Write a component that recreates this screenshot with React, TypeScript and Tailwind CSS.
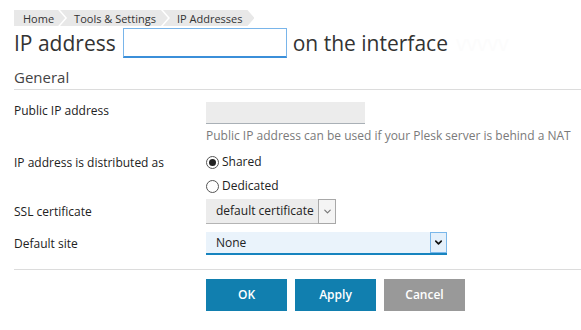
import { ChevronDown } from "lucide-react";

const crumbs = ["Home", "Tools & Settings", "IP Addresses"];

/* ── Breadcrumb tab ──────────────────────────────────────────── */
function Crumb({ label, first }: { label: string; first: boolean }) {
  return (
    <div
      className={`bg-[#e8e8e8] h-4 flex items-center text-[11px] leading-none text-[#333] ${
        first
          ? "pl-[9px] pr-[11px] [clip-path:polygon(0_0,calc(100%_-_7px)_0,100%_50%,calc(100%_-_7px)_100%,0_100%)]"
          : "-ml-[5px] pl-[14px] pr-[12px] [clip-path:polygon(0_0,calc(100%_-_7px)_0,100%_50%,calc(100%_-_7px)_100%,0_100%,7px_50%)]"
      }`}
    >
      {label}
    </div>
  );
}

/* ── Form row ────────────────────────────────────────────────── */
function Row({ label, children, className = "" }: { label: string; children: React.ReactNode; className?: string }) {
  return (
    <div className={`flex ${className}`}>
      <div className="w-[192px] shrink-0 text-[12px] text-[#222]">{label}</div>
      <div className="flex-1">{children}</div>
    </div>
  );
}

function Radio({ label, checked }: { label: string; checked?: boolean }) {
  return (
    <div className="flex items-center gap-[3px] h-4 text-[12px] text-[#222]">
      <span className="w-[13px] h-[13px] rounded-full border border-[#555] bg-white flex items-center justify-center">
        {checked && <span className="w-[7px] h-[7px] rounded-full bg-[#222]" />}
      </span>
      {label}
    </div>
  );
}

export default function App() {
  return (
    <div className="w-[581px] h-[330px] bg-white overflow-hidden pl-[14px] pt-[10px] font-['Open_Sans',sans-serif]">
      {/* Breadcrumbs */}
      <div className="flex">
        {crumbs.map((c, i) => (
          <Crumb key={c} label={c} first={i === 0} />
        ))}
      </div>

      {/* Title */}
      <div className="flex items-center mt-[2px] h-[30px] text-[21px] leading-none text-[#333]">
        <span>IP address</span>
        <div className="w-[164px] h-[30px] ml-[7px] mr-[6px] border border-[#79b5ea] border-b-2 border-b-[#3b8fd9] bg-white" />
        <span>on the interface</span>
        <span className="ml-[8px] text-[#fcfcfc]">vvvvv</span>
      </div>

      {/* Section */}
      <div className="mt-[10px] text-[15px] leading-[18px] text-[#444] pb-[3px] border-b border-[#dcdcdc]">
        General
      </div>

      <Row label="Public IP address" className="mt-[12px] items-start">
        <div className="w-[159px] h-[22px] bg-[#ececec] border-b border-[#a9b0b6]" />
        <div className="mt-[3px] text-[12px] text-[#7a7a7a]">
          Public IP address can be used if your Plesk server is behind a NAT
        </div>
      </Row>

      <Row label="IP address is distributed as" className="mt-[9px] items-start">
        <Radio label="Shared" checked />
        <div className="mt-2">
          <Radio label="Dedicated" />
        </div>
      </Row>

      <Row label="SSL certificate" className="mt-[5px] items-center">
        <div className="flex w-[130px] h-[25px] bg-[#ececec] border-b border-[#b4b4b4]">
          <div className="flex-1 pl-[10px] flex items-center text-[12px] text-[#222]">default certificate</div>
          <div className="w-[18px] h-[25px] border border-[#a8a8a8] bg-[#f4f4f4] flex items-center justify-center">
            <ChevronDown size={11} strokeWidth={2.5} className="text-[#777]" />
          </div>
        </div>
      </Row>

      <Row label="Default site" className="mt-[8px] items-center">
        <div className="flex w-[241px] h-[23px] bg-[#eaf3fb] border-b-2 border-[#1784bf]">
          <div className="flex-1 pl-[10px] flex items-center text-[12px] text-[#222]">None</div>
          <div className="w-[17px] h-[21px] border border-[#7ab7ea] bg-[#e4f0fb] flex items-center justify-center">
            <ChevronDown size={11} strokeWidth={3.5} className="text-[#111]" />
          </div>
        </div>
      </Row>

      {/* Actions */}
      <div className="mt-[14px] border-t border-[#dcdcdc] pt-[9px] pl-[192px] flex gap-[8px]">
        <button className="w-[81px] h-[32px] bg-[#117faf] text-white text-[12px] font-semibold">OK</button>
        <button className="w-[81px] h-[32px] bg-[#117faf] text-white text-[12px] font-semibold">Apply</button>
        <button className="w-[81px] h-[32px] bg-[#999999] text-white text-[12px] font-semibold">Cancel</button>
      </div>
    </div>
  );
}
